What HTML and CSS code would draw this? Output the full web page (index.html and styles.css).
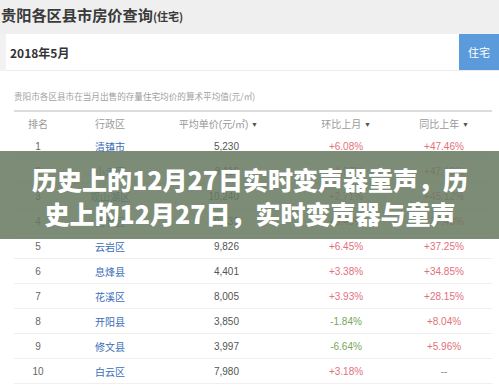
FILE: index.html
```html
<!DOCTYPE html>
<html lang="zh-CN">
<head>
<meta charset="utf-8">
<title>贵阳各区县市房价查询</title>
<link rel="stylesheet" href="styles.css">
</head>
<body>
<div class="page">
  <header class="top">
    <h1 class="title">贵阳各区县市房价查询<span class="title-sub">(住宅)</span></h1>
  </header>
  <div class="panel-row">
    <div class="panel">
      <div class="date">2018年5月</div>
      <div class="tab">住宅</div>
    </div>
  </div>
  <section class="content">
    <p class="desc">贵阳市各区县市在当月出售的存量住宅均价的算术平均值(元/㎡)</p>
    <div class="table">
      <div class="row head">
        <div class="c-rank">排名</div>
        <div class="c-name">行政区</div>
        <div class="c-price h-price">平均单价(元/㎡) <span class="arrow">▼</span></div>
        <div class="c-mom">环比上月 <span class="arrow">▼</span></div>
        <div class="c-yoy">同比上年 <span class="arrow">▼</span></div>
      </div>
      <div class="row"><div class="c-rank">1</div><div class="c-name link">清镇市</div><div class="c-price">5,230</div><div class="c-mom up">+6.08%</div><div class="c-yoy up">+47.46%</div></div>
      <div class="row"><div class="c-rank">2</div><div class="c-name link">小河区</div><div class="c-price">8,116</div><div class="c-mom up">+4.97%</div><div class="c-yoy up">+47.19%</div></div>
      <div class="row"><div class="c-rank">3</div><div class="c-name link">观山湖区</div><div class="c-price">10,240</div><div class="c-mom up">+2.71%</div><div class="c-yoy up">+45.12%</div></div>
      <div class="row"><div class="c-rank">4</div><div class="c-name link">南明区</div><div class="c-price">9,539</div><div class="c-mom up">+5.49%</div><div class="c-yoy up">+37.48%</div></div>
      <div class="row"><div class="c-rank">5</div><div class="c-name link">云岩区</div><div class="c-price">9,826</div><div class="c-mom up">+6.45%</div><div class="c-yoy up">+37.25%</div></div>
      <div class="row"><div class="c-rank">6</div><div class="c-name link">息烽县</div><div class="c-price">4,401</div><div class="c-mom up">+3.38%</div><div class="c-yoy up">+34.85%</div></div>
      <div class="row"><div class="c-rank">7</div><div class="c-name link">花溪区</div><div class="c-price">8,005</div><div class="c-mom up">+3.93%</div><div class="c-yoy up">+28.15%</div></div>
      <div class="row"><div class="c-rank">8</div><div class="c-name link">开阳县</div><div class="c-price">3,850</div><div class="c-mom down">-1.84%</div><div class="c-yoy up">+8.04%</div></div>
      <div class="row"><div class="c-rank">9</div><div class="c-name link">修文县</div><div class="c-price">3,997</div><div class="c-mom down">-6.64%</div><div class="c-yoy up">+5.96%</div></div>
      <div class="row"><div class="c-rank">10</div><div class="c-name link">白云区</div><div class="c-price">7,980</div><div class="c-mom up">+3.18%</div><div class="c-yoy none">--</div></div>
    </div>
  </section>
  <div class="banner">
    <h2 class="banner-text">历史上的12月27日实时变声器童声，历史上的12月27日，实时变声器与童声</h2>
  </div>
</div>
</body>
</html>
```
FILE: styles.css
```css
* { box-sizing: border-box; }
html, body { margin: 0; padding: 0; }
body {
  width: 499px;
  height: 390px;
  overflow: hidden;
  background: #ffffff;
  font-family: "Liberation Sans", "Noto Sans CJK SC", sans-serif;
}
.page { position: relative; width: 499px; height: 390px; }

.top {
  height: 34px;
  background: #efefef;
  padding: 4px 0 0 1px;
}
.title {
  margin: 0;
  font-family: "Noto Sans CJK SC", sans-serif;
  font-size: 15.2px;
  line-height: 20px;
  font-weight: 700;
  color: #3a3a3a;
}
.title-sub { font-size: 11px; font-weight: 700; }

.panel-row {
  background: #f2f2f2;
  padding-left: 6px;
}
.panel {
  height: 37px;
  background: #ffffff;
  border-bottom: 1px solid #ececec;
  display: flex;
  align-items: stretch;
  justify-content: space-between;
}
.date {
  padding-left: 4px;
  display: flex;
  align-items: center;
  font-family: "Noto Sans CJK SC", sans-serif;
  font-size: 12px;
  font-weight: 700;
  color: #333;
}
.tab {
  width: 40px;
  background: #5b9bdc;
  color: #ffffff;
  font-family: "Noto Sans CJK SC", sans-serif;
  font-size: 11px;
  display: flex;
  align-items: center;
  justify-content: center;
}

.content { padding: 19px 7px 0 14px; }
.desc {
  margin: 0 0 8px 0;
  font-family: "Noto Sans CJK SC", sans-serif;
  font-size: 8.6px;
  line-height: 12px;
  color: #a0a0a0;
}
.table { border-top: 2px solid #dcdcdc; }
.row {
  display: grid;
  grid-template-columns: 48px 96px 138px 100px 96px;
  height: 25px;
  align-items: center;
  border-bottom: 1px solid #efefef;
  font-size: 10px;
  color: #666;
}
.row.head { height: 22px; color: #9a9a9a; border-bottom: none; }
.c-rank, .c-name, .c-mom, .c-yoy { text-align: center; }
.c-price { text-align: right; padding-right: 57px; color: #555; }
.head .c-price { padding-right: 38px; color: #9a9a9a; }
.arrow { font-size: 7px; color: #555; vertical-align: 1px; }
.link { color: #3b6db8; }
.up { color: #e2707c; }
.down { color: #78a65a; }
.none { color: #888; }

.banner {
  position: absolute;
  left: 0;
  top: 151px;
  width: 499px;
  height: 88px;
  background: rgba(104, 121, 97, 0.86);
  padding: 11px 29px 0 30px;
}
.banner-text {
  margin: 0;
  text-align: center;
  font-family: "Noto Sans CJK SC", sans-serif;
  font-size: 25px;
  line-height: 34px;
  font-weight: 900;
  color: #ffffff;
}
```
